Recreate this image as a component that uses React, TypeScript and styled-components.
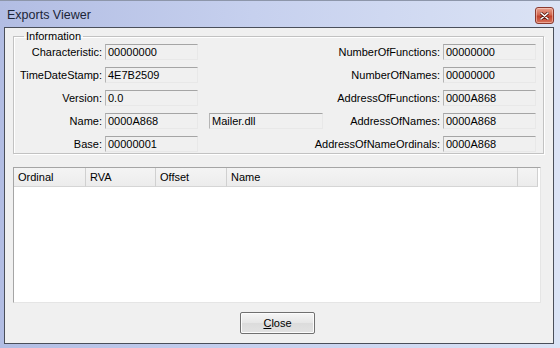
import { Fragment } from 'react'
import styled, { createGlobalStyle } from 'styled-components'

const GlobalStyle = createGlobalStyle`
  html, body {
    margin: 0;
    padding: 0;
    background: #b4bfe3;
  }
  body {
    font-family: 'Liberation Sans', Arial, sans-serif;
    font-size: 11px;
    color: #000;
  }
`

const Frame = styled.div`
  width: 560px;
  height: 348px;
  box-sizing: border-box;
  display: flex;
  flex-direction: column;
  padding: 0 6px 4px 4px;
  border-top: 1px solid #8d96aa;
  background: linear-gradient(90deg, #b2bde3 0%, #c6d0ee 45%, #dbe3f5 100%);
`

const TitleBar = styled.div`
  height: 27px;
  display: flex;
  align-items: center;
  justify-content: space-between;
  padding-left: 3px;
`

const Title = styled.span`
  font-family: 'Liberation Sans', Arial, sans-serif;
  font-size: 12.5px;
  color: #1b2538;
  margin-top: 2px;
`

const CloseX = styled.div`
  width: 19px;
  height: 17px;
  margin-top: 3px;
  box-sizing: border-box;
  border: 1px solid #8a3a30;
  border-radius: 3px;
  background: linear-gradient(180deg, #e8a290 0%, #d2664f 45%, #c0402c 55%, #d8745c 100%);
  display: flex;
  align-items: center;
  justify-content: center;
  box-shadow: inset 0 0 0 1px rgba(255, 220, 210, 0.5);
`

const Client = styled.div`
  flex: 1;
  display: flex;
  flex-direction: column;
  background: #f0f0f0;
  border: 1px solid #4a4f5a;
  padding: 2px 9px 9px 8px;
`

const Group = styled.fieldset`
  margin: 0;
  min-width: 0;
  padding: 2px 7px 0 4px;
  height: 124px;
  box-sizing: border-box;
  border: 1px solid #c2c2c2;
  box-shadow: inset 1px 1px 0 #ffffff, 1px 1px 0 #ffffff;
  display: flex;
  justify-content: space-between;
`

const Legend = styled.legend`
  padding: 0 2px;
  margin-left: 6px;
  line-height: 12px;
`

const FieldGrid = styled.div<{ $cols: string }>`
  display: grid;
  grid-template-columns: ${p => p.$cols};
  grid-auto-rows: 16px;
  row-gap: 7px;
  column-gap: 3px;
  align-items: center;
`

const Label = styled.span`
  justify-self: end;
  white-space: nowrap;
`

const Field = styled.div<{ $span?: boolean }>`
  height: 16px;
  box-sizing: border-box;
  padding: 1px 0 0 2px;
  line-height: 13px;
  background: #f0f0f0;
  border-top: 1px solid #a5a5a5;
  border-left: 1px solid #b5b5b5;
  border-right: 1px solid #e8e8e8;
  border-bottom: 1px solid #e8e8e8;
  margin-left: ${p => (p.$span ? '8px' : '0')};
`

const Empty = styled.span``

const List = styled.div`
  margin-top: 13px;
  margin-right: 3px;
  height: 136px;
  box-sizing: border-box;
  background: #ffffff;
  border-top: 1px solid #a5a5a5;
  border-left: 1px solid #a5a5a5;
  border-right: 1px solid #e5e5e5;
  border-bottom: 1px solid #e5e5e5;
  display: flex;
  flex-direction: column;
`

const Header = styled.div`
  display: flex;
  height: 19px;
  margin-right: 2px;
`

const HeadCell = styled.div<{ $w?: number; $grow?: boolean }>`
  width: ${p => (p.$w ? `${p.$w}px` : 'auto')};
  flex: ${p => (p.$grow ? '1' : 'none')};
  box-sizing: border-box;
  padding: 3px 0 0 4px;
  background: linear-gradient(180deg, #f4f4f4 0%, #ececec 100%);
  border-right: 1px solid #d0d0d0;
  border-bottom: 1px solid #d5d5d5;
`

const Footer = styled.div`
  display: flex;
  justify-content: center;
  margin-top: 9px;
  padding-right: 2px;
`

const Button = styled.button`
  width: 75px;
  height: 22px;
  font-family: 'Liberation Sans', Arial, sans-serif;
  font-size: 11px;
  color: #000;
  background: linear-gradient(180deg, #f6f6f6 0%, #e6e6e6 50%, #dcdcdc 51%, #e2e2e2 100%);
  border: 1px solid #707070;
  border-radius: 2px;
  box-shadow: inset 0 0 0 1px #fcfcfc;
  padding: 0;
  u {
    text-decoration: underline;
  }
`

const leftRows = [
  ['Characteristic:', '00000000'],
  ['TimeDateStamp:', '4E7B2509'],
  ['Version:', '0.0'],
  ['Name:', '0000A868', 'Mailer.dll'],
  ['Base:', '00000001'],
]

const rightRows = [
  ['NumberOfFunctions:', '00000000'],
  ['NumberOfNames:', '00000000'],
  ['AddressOfFunctions:', '0000A868'],
  ['AddressOfNames:', '0000A868'],
  ['AddressOfNameOrdinals:', '0000A868'],
]

export default function App() {
  return (
    <>
      <GlobalStyle />
      <Frame>
        <TitleBar>
          <Title>Exports Viewer</Title>
          <CloseX>
            <svg width="9" height="8" viewBox="0 0 9 8">
              <path d="M1 1 L8 7 M8 1 L1 7" stroke="#5a1a10" strokeWidth="3" strokeLinecap="round" />
              <path d="M1 1 L8 7 M8 1 L1 7" stroke="#ffffff" strokeWidth="1.6" strokeLinecap="round" />
            </svg>
          </CloseX>
        </TitleBar>
        <Client>
          <Group>
            <Legend>Information</Legend>
            <FieldGrid $cols="84px 93px 122px">
              {leftRows.map(([label, value, extra]) => (
                <Fragment key={label}>
                  <Label>{label}</Label>
                  <Field>{value}</Field>
                  {extra ? <Field $span>{extra}</Field> : <Empty />}
                </Fragment>
              ))}
            </FieldGrid>
            <FieldGrid $cols="100px 93px">
              {rightRows.map(([label, value]) => (
                <Fragment key={label}>
                  <Label>{label}</Label>
                  <Field>{value}</Field>
                </Fragment>
              ))}
            </FieldGrid>
          </Group>
          <List>
            <Header>
              <HeadCell $w={72}>Ordinal</HeadCell>
              <HeadCell $w={70}>RVA</HeadCell>
              <HeadCell $w={71}>Offset</HeadCell>
              <HeadCell $w={291}>Name</HeadCell>
              <HeadCell $grow />
            </Header>
          </List>
          <Footer>
            <Button>
              <u>C</u>lose
            </Button>
          </Footer>
        </Client>
      </Frame>
    </>
  )
}
